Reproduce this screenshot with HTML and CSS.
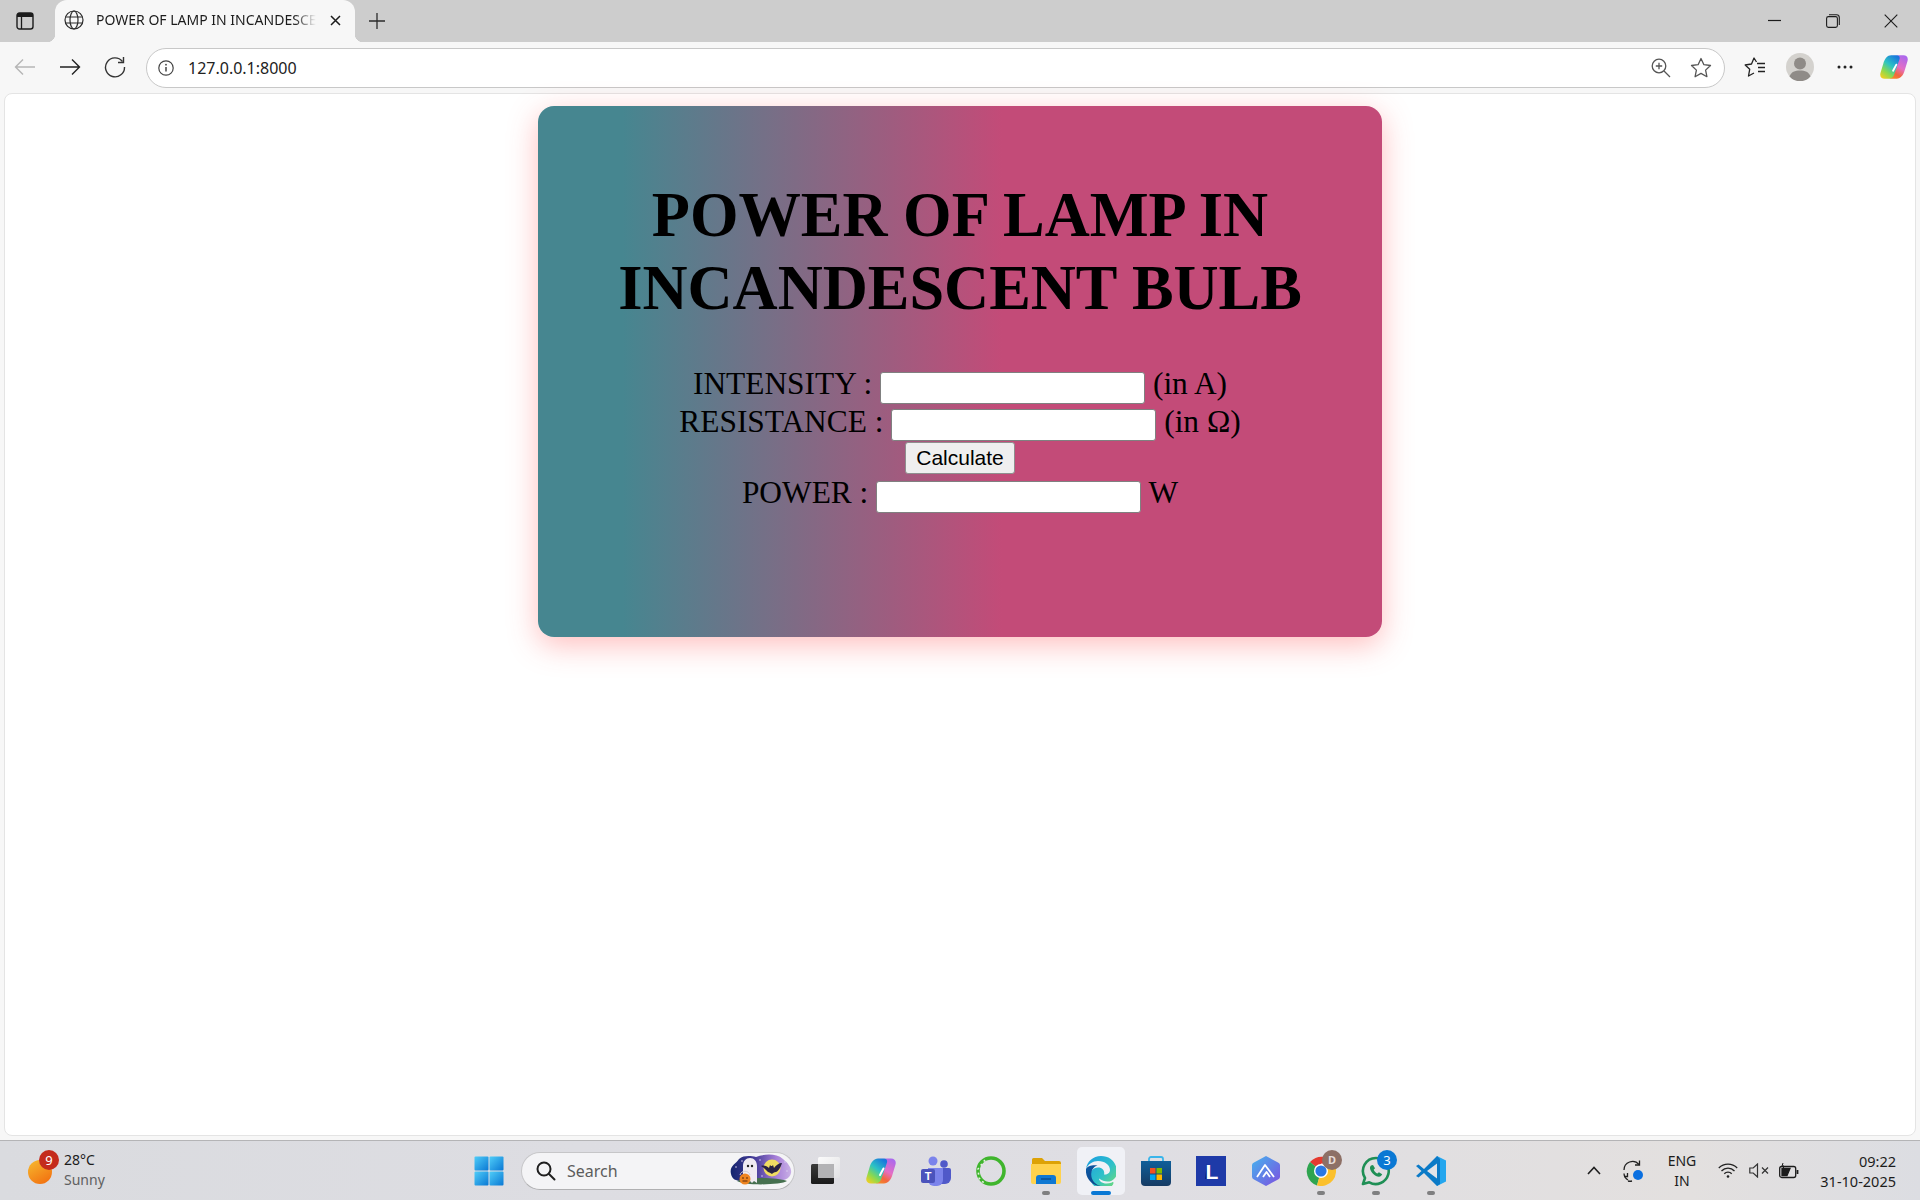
FILE: index.html
```html
<!DOCTYPE html>
<html lang="en">
<head>
<meta charset="utf-8">
<title>POWER OF LAMP IN INCANDESCENT BULB</title>
<link rel="stylesheet" href="styles.css">
</head>
<body>
<svg class="defs" width="0" height="0" aria-hidden="true">
  <defs>
    <linearGradient id="cpA" x1="0.75" y1="0" x2="0.1" y2="1"><stop offset="0" stop-color="#1a78dc"/><stop offset=".4" stop-color="#2cc3c4"/><stop offset=".7" stop-color="#8ad94f"/><stop offset="1" stop-color="#f7cf1d"/></linearGradient>
    <linearGradient id="cpB" x1="0.8" y1="0" x2="0.3" y2="1"><stop offset="0" stop-color="#a968ee"/><stop offset=".5" stop-color="#e56ec4"/><stop offset=".8" stop-color="#f2663f"/><stop offset="1" stop-color="#f4862a"/></linearGradient>
    <linearGradient id="winG" x1="0" y1="0" x2="1" y2="1"><stop offset="0" stop-color="#4fcdf8"/><stop offset="1" stop-color="#0a78d4"/></linearGradient>
    <linearGradient id="sunG" x1="0.2" y1="0" x2="0.8" y2="1"><stop offset="0" stop-color="#f6b52c"/><stop offset="1" stop-color="#f26f10"/></linearGradient>
    <linearGradient id="edgeA" x1="0" y1="0" x2="1" y2="1"><stop offset="0" stop-color="#1b9de2"/><stop offset=".55" stop-color="#2fc1c9"/><stop offset="1" stop-color="#7be06a"/></linearGradient>
    <linearGradient id="edgeB" x1="0" y1="0" x2="1" y2="1"><stop offset="0" stop-color="#0c5aa6"/><stop offset="1" stop-color="#0f3f82"/></linearGradient>
    <linearGradient id="mtG" x1="0" y1="0" x2="1" y2="1"><stop offset="0" stop-color="#45b4ee"/><stop offset="1" stop-color="#7d4fe0"/></linearGradient>
    <linearGradient id="bagG" x1="0" y1="0" x2="0" y2="1"><stop offset="0" stop-color="#0f5f9a"/><stop offset="1" stop-color="#163a63"/></linearGradient>
    <linearGradient id="ghostG" x1="0" y1="0" x2="1" y2="0"><stop offset="0" stop-color="#14246e"/><stop offset=".42" stop-color="#4a3f9c"/><stop offset=".75" stop-color="#a77fd8"/><stop offset="1" stop-color="#c9b0e6"/></linearGradient>
    <linearGradient id="tvG" x1="0" y1="0" x2="1" y2="1"><stop offset="0" stop-color="#fbfbfb"/><stop offset="1" stop-color="#e2e2e4"/></linearGradient>
    <linearGradient id="tvD" x1="0" y1="0" x2="0" y2="1"><stop offset="0" stop-color="#3a3a3a"/><stop offset="1" stop-color="#1a1a1a"/></linearGradient>
    <symbol id="copilot" viewBox="0 0 30 30">
      <path fill="url(#cpB)" d="M18 27.500h-6c-2.500 0-3.500-1.500-3-4l1-3 5-14c1-2.500 3-4 5.500-4H25c3.500 0 5.500 2.500 4.500 6l-3 10C25 24 22 27.500 18 27.500z"/>
      <path fill="url(#cpA)" d="M12 2.500h6c2.500 0 3.500 1.500 3 4l-1 3-5 14c-1 2.500-3 4-5.500 4H5c-3.500 0-5.500-2.500-4.500-6l3-10C5 6 8 2.500 12 2.500z"/>
      <path stroke="#fff" stroke-width="2" stroke-linecap="round" d="M17.500 12.500l-3.500 6.500"/>
    </symbol>
  </defs>
</svg>

<header class="tabstrip">
  <div class="tabstrip-btn">
    <svg width="18" height="18" viewBox="0 0 18 18"><rect x="1" y="1" width="16" height="16" rx="2.500" fill="none" stroke="#1c1c1c" stroke-width="1.400"/><path d="M1 3.500A2.500 2.500 0 0 1 3.500 1h11A2.500 2.500 0 0 1 17 3.500V5H1z" fill="#1c1c1c"/><path d="M5.500 5v12" stroke="#1c1c1c" stroke-width="1.300"/></svg>
  </div>
  <div class="tab">
    <svg class="tab-globe" width="20" height="20" viewBox="0 0 20 20" fill="none" stroke="#2b2b2b" stroke-width="1.200"><circle cx="10" cy="10" r="9"/><ellipse cx="10" cy="10" rx="4" ry="9"/><path d="M1.500 7h17M1.500 13h17"/></svg>
    <span class="tab-title">POWER OF LAMP IN INCANDESCENT BULB</span>
    <svg class="tab-close" width="11" height="11" viewBox="0 0 11 11"><path d="M1 1l9 9M10 1l-9 9" stroke="#1c1c1c" stroke-width="1.500"/></svg>
  </div>
  <div class="newtab">
    <svg width="18" height="18" viewBox="0 0 18 18"><path d="M9 1v16M1 9h16" stroke="#2b2b2b" stroke-width="1.300"/></svg>
  </div>
  <div class="winctl">
    <div class="winctl-btn"><svg width="14" height="14" viewBox="0 0 14 14"><path d="M0 6.500h13" stroke="#1c1c1c" stroke-width="1.200"/></svg></div>
    <div class="winctl-btn"><svg width="14" height="14" viewBox="0 0 14 14" fill="none" stroke="#1c1c1c" stroke-width="1.100"><rect x=".6" y="2.600" width="10.800" height="10.800" rx="1.800"/><path d="M3 .7h7.500A2.800 2.800 0 0 1 13.300 3.500V11"/></svg></div>
    <div class="winctl-btn"><svg width="14" height="14" viewBox="0 0 14 14"><path d="M.7.7l12.600 12.600M13.300.7L.7 13.300" stroke="#1c1c1c" stroke-width="1.100"/></svg></div>
  </div>
</header>

<nav class="toolbar">
  <div class="tool"><svg width="22" height="18" viewBox="0 0 22 18" fill="none" stroke="#b6b6b6" stroke-width="1.400"><path d="M21 9H1.500M9 1.500L1.500 9 9 16.500"/></svg></div>
  <div class="tool"><svg width="22" height="18" viewBox="0 0 22 18" fill="none" stroke="#222" stroke-width="1.400"><path d="M1 9h19.500M13 1.500L20.500 9 13 16.500"/></svg></div>
  <div class="tool"><svg width="22" height="22" viewBox="0 0 22 22" fill="none" stroke="#333" stroke-width="1.400"><path d="M18.500 5.500A9.500 9.500 0 1 0 20.500 11"/><path d="M19.500 1v5.500H14"/></svg></div>
  <div class="address">
    <svg class="addr-info" width="16" height="16" viewBox="0 0 16 16" fill="none" stroke="#444" stroke-width="1.200"><circle cx="8" cy="8" r="7.200"/><path d="M8 7v4.500" stroke-width="1.500"/><circle cx="8" cy="4.700" r=".9" fill="#444" stroke="none"/></svg>
    <span class="url">127.0.0.1:8000</span>
    <div class="addr-end">
      <svg width="20" height="20" viewBox="0 0 20 20" fill="none" stroke="#555" stroke-width="1.300"><circle cx="8" cy="8" r="6.800"/><path d="M8 4.800v6.400M4.800 8h6.400M13 13l6 6"/></svg>
      <svg width="22" height="21" viewBox="0 0 22 21" fill="none" stroke="#555" stroke-width="1.300" stroke-linejoin="round"><path d="M11 1.500l2.900 6.200 6.600.8-4.900 4.600 1.300 6.600-5.900-3.300-5.900 3.300 1.300-6.600L1.500 8.500l6.600-.8z"/></svg>
    </div>
  </div>
  <div class="tool-group">
    <div class="tool"><svg width="22" height="20" viewBox="0 0 22 20" fill="none" stroke="#222" stroke-width="1.300" stroke-linejoin="round"><path d="M12.500 5L10 1 7.500 7 1.200 8l4.500 4.300L4.500 19l5.500-3"/><path d="M13 6.500h8M14 10.500h7M14 14.500h7"/></svg></div>
    <div class="tool"><svg width="28" height="28" viewBox="0 0 28 28"><circle cx="14" cy="14" r="14" fill="#d4d2ce"/><circle cx="14" cy="10.500" r="6" fill="#8f8b87"/><path d="M3.500 23.500C5 19 9 17.500 14 17.500s9 1.500 10.500 6A14 14 0 0 1 3.500 23.500z" fill="#8f8b87"/></svg></div>
    <div class="tool"><svg width="16" height="4" viewBox="0 0 16 4" fill="#222"><circle cx="2" cy="2" r="1.500"/><circle cx="8" cy="2" r="1.500"/><circle cx="14" cy="2" r="1.500"/></svg></div>
    <div class="tool tool-wide"><svg width="28" height="28"><use href="#copilot"/></svg></div>
  </div>
</nav>

<main class="viewport">
  <section class="card">
    <h1 class="card-title">POWER OF LAMP IN INCANDESCENT BULB</h1>
    <form class="calc">
      <label class="row">INTENSITY : <input class="field" type="text"> (in A)</label>
      <label class="row">RESISTANCE : <input class="field" type="text"> (in Ω)</label>
      <div class="btn-row"><button class="calc-btn" type="button">Calculate</button></div>
      <label class="row">POWER : <input class="field" type="text"> W</label>
    </form>
  </section>
</main>

<footer class="taskbar">
  <div class="weather">
    <div class="weather-icon">
      <svg width="24" height="24" viewBox="0 0 24 24"><circle cx="12" cy="12" r="12" fill="url(#sunG)"/></svg>
      <span class="weather-badge">9</span>
    </div>
    <div class="weather-text"><span class="temp">28°C</span><span class="cond">Sunny</span></div>
  </div>
  <div class="center">
    <div class="cell"><svg width="30" height="30" viewBox="0 0 30 30" fill="url(#winG)"><rect x="0.500" y="0.500" width="14" height="14" rx="1"/><rect x="15.500" y="0.500" width="14" height="14" rx="1"/><rect x="0.500" y="15.500" width="14" height="14" rx="1"/><rect x="15.500" y="15.500" width="14" height="14" rx="1"/></svg></div>
    <div class="search">
      <svg class="search-icon" width="20" height="20" viewBox="0 0 20 20" fill="none" stroke="#1f1f1f" stroke-width="2"><circle cx="8" cy="8" r="6.500"/><path d="M13 13l5.500 5.500" stroke-linecap="round"/></svg>
      <span class="search-text">Search</span>
      <svg class="search-art" width="64" height="34" viewBox="0 0 64 34">
        <path d="M2 20C0 12 7 10 10 5c5-4 12-3 17-2 8-3 20-4 27 2 5 4 9 9 8 14-1 6-8 8-14 8H12C7 27 3 25 2 20z" fill="url(#ghostG)"/>
        <path d="M8 27c10-4 40-4 50 0-6 4-42 5-50 0z" fill="#46704f"/>
        <circle cx="43" cy="14" r="8.500" fill="#f0dc62"/>
        <path d="M32 12c3-1 6 0 8 2l1-3 1 1h1l1-1 1 3c2-3 5-5 8-5-1 3-3 8-6 9-2 0-3 1-4 2-1-1-2-1-4-2-3-3-5-5-7-6z" fill="#2a2344"/>
        <g fill="#d9cdf0"><circle cx="7" cy="13" r=".8"/><circle cx="13" cy="7" r=".8"/><circle cx="31" cy="6" r=".8"/><circle cx="56" cy="8" r=".8"/><circle cx="58" cy="17" r=".8"/><circle cx="33" cy="22" r=".8"/></g>
        <path d="M14 29V12c0-5 3-8 7-8s7 3 7 8v17l-3-2-2 2-2-2-3 2z" fill="#efeaf2"/>
        <circle cx="19" cy="12" r="1.200" fill="#222"/><circle cx="23" cy="12" r="1.200" fill="#222"/>
        <path d="M11 21c1-5 9-5 10 0" fill="none" stroke="#cfcfd6" stroke-width="1"/>
        <circle cx="16" cy="25" r="5.500" fill="#ee8420"/>
        <path d="M13 24h2M17 24h2M13.500 27h5" stroke="#5a2a08" stroke-width="1"/>
      </svg>
    </div>
    <div class="apps">
      <div class="cell"><svg width="30" height="30" viewBox="0 0 30 30"><rect x="0" y="8" width="23" height="20" rx="1.500" fill="url(#tvD)"/><rect x="7" y="1" width="22" height="21" rx="1.500" fill="url(#tvG)"/><path d="M7 8h16v14H8.500A1.500 1.500 0 0 1 7 20.500z" fill="#b3b3b5"/></svg></div>
      <div class="cell"><svg width="30" height="30"><use href="#copilot"/></svg></div>
      <div class="cell"><svg width="30" height="30" viewBox="0 0 30 30"><circle cx="12" cy="5" r="4.500" fill="#7b83eb"/><circle cx="23" cy="8" r="3.800" fill="#5059c9"/><path d="M18 12h10a2 2 0 0 1 2 2v8a6 6 0 0 1-6 6h-6z" fill="#5059c9"/><path d="M7 12h15v12a6 6 0 0 1-6 6h-3a6 6 0 0 1-6-6z" fill="#7b83eb"/><rect x="0" y="13" width="14" height="14" rx="2" fill="#4b53bc"/><text class="svg-t" x="7" y="24" text-anchor="middle" font-size="11" fill="#fff">T</text></svg></div>
      <div class="cell"><svg width="30" height="30" viewBox="0 0 30 30" fill="none"><circle cx="15" cy="15" r="13" stroke="#3fb52d" stroke-width="3.600"/><path d="M9 4L2 13l1 9 5 5" stroke="#e6f0e0" stroke-width="1.600" stroke-dasharray="2 3"/></svg></div>
      <div class="cell running"><svg width="30" height="30" viewBox="0 0 30 30"><path d="M1 3.500A1.500 1.500 0 0 1 2.500 2H11l3 3h14a2 2 0 0 1 2 2v3H1z" fill="#dda206"/><path d="M0 8h30v18a2 2 0 0 1-2 2H2a2 2 0 0 1-2-2z" fill="#ffd24d"/><path d="M5 22a3 3 0 0 1 3-3h14a3 3 0 0 1 3 3v6H5z" fill="#0f78d2"/><path d="M10 23h10" stroke="#0a4d8e" stroke-width="1.400"/></svg></div>
      <div class="cell active"><svg width="30" height="30" viewBox="0 0 30 30"><path d="M15 0C7 0 1 5.500 0 13c2-5 7-8 12-8 7 0 12 4 12 9 0 3-3 5-6 4.500 1-3-1-7-6-7-5 0-8 4-8 9 0 8 7 13 13 13 5 0 8-2 10-5 1-2 .5-3-1-2-8 3-13-1-13-4 5 4 12 4 15 .5 2.500-2 3-5 3-8.500C30 6 24 0 15 0z" fill="url(#edgeA)"/><path d="M0 13c-1 9 6 17 15 17 1 0 1 0 0 0-6-1-11-7-9.500-14 1-4 4-6.500 6.500-6.500-5-1-11 .500-12 3.500z" fill="url(#edgeB)"/></svg></div>
      <div class="cell"><svg width="30" height="30" viewBox="0 0 30 30"><path d="M8 5V3a2 2 0 0 1 2-2h10a2 2 0 0 1 2 2v2" fill="none" stroke="#3ab5ea" stroke-width="1.800"/><path d="M0 5h30v21a4 4 0 0 1-4 4H4a4 4 0 0 1-4-4z" fill="url(#bagG)"/><rect x="9" y="12" width="5.500" height="5.500" fill="#f25022"/><rect x="15.500" y="12" width="5.500" height="5.500" fill="#7fba00"/><rect x="9" y="18.500" width="5.500" height="5.500" fill="#00a4ef"/><rect x="15.500" y="18.500" width="5.500" height="5.500" fill="#ffb900"/></svg></div>
      <div class="cell"><svg width="30" height="30" viewBox="0 0 30 30"><rect width="30" height="30" fill="#1e3aa8"/><path d="M9 23l2-16v16z" fill="#0c2270"/><text class="svg-t" x="16" y="23" text-anchor="middle" font-size="21" fill="#fff">L</text></svg></div>
      <div class="cell"><svg width="28" height="30" viewBox="0 0 28 30"><path d="M14 0l12 6.500a3 3 0 0 1 2 3V21a3 3 0 0 1-2 2.500L14 30 2 23.500A3 3 0 0 1 0 21V9.500a3 3 0 0 1 2-3z" fill="url(#mtG)"/><path d="M5 21L13 9l9 12M11 21l3.500-5 3.500 5" fill="none" stroke="#fff" stroke-width="1.800" stroke-linejoin="round"/></svg></div>
      <div class="cell running">
        <svg width="30" height="30" viewBox="0 0 30 30"><path d="M15 15L4 6A15 15 0 0 1 28 7.500H15z" fill="#e53a2f"/><path d="M15 15L4 6A15 15 0 0 0 11 29.500z" fill="#2ea44f"/><path d="M15 15L11 29.500A15 15 0 0 0 28 7.500z" fill="#fbc02d"/><circle cx="15" cy="15" r="7" fill="#fff"/><circle cx="15" cy="15" r="5.600" fill="#2a78e4"/></svg>
        <span class="badge badge-d">D</span>
      </div>
      <div class="cell running">
        <svg width="30" height="30" viewBox="0 0 30 30" fill="none"><path d="M15 2a13 13 0 0 0-11 20L2 28l6.300-1.700A13 13 0 1 0 15 2z" stroke="#1f8f55" stroke-width="2.600" stroke-linejoin="round"/><path d="M10 9.500c-1.800 1.500-1.200 5 2 8.200 3 3 6.500 3.800 8.200 2l1-1.500-3.300-2-1.500 1.300c-1.500-.5-3-2-3.700-3.700l1.300-1.500-2-3.300z" fill="#1f8f55"/></svg>
        <span class="badge badge-n">3</span>
      </div>
      <div class="cell running"><svg width="30" height="30" viewBox="0 0 30 30"><path d="M21 0l9 4.500v21L21 30z" fill="#24a6ee"/><path d="M21 0L8 13 2.500 8.500 0 10l5.500 5L0 20l2.500 1.500L8 17l13 13 3-2V3z" fill="#0b7ac7"/><path d="M21 7.500L11 15l10 7.500z" fill="#e2e3e8"/></svg></div>
    </div>
  </div>
  <div class="tray">
    <div class="tray-item tray-chev"><svg width="14" height="9" viewBox="0 0 14 9" fill="none" stroke="#1f1f1f" stroke-width="1.600"><path d="M1 8l6-6.500L13 8"/></svg></div>
    <div class="tray-item tray-sync"><svg width="22" height="22" viewBox="0 0 22 22" fill="none" stroke="#222" stroke-width="1.300"><path d="M1 10A8.500 8.500 0 0 1 16 4.500"/><path d="M16.500.5V5h-4.500"/><path d="M5 21a8 8 0 0 0 4 0"/><path d="M4.500 13v3.500H1"/><path d="M1 13.500a8 8 0 0 0 4 6.500"/><circle cx="15" cy="15" r="5" fill="#0a6fe0" stroke="none"/></svg></div>
    <div class="tray-lang"><span>ENG</span><span>IN</span></div>
    <div class="tray-item tray-wifi"><svg width="20" height="15" viewBox="0 0 20 15" fill="none" stroke="#222" stroke-width="1.300"><path d="M.8 5a13 13 0 0 1 18.400 0M3.500 8a9 9 0 0 1 13 0M6.300 10.800a5 5 0 0 1 7.400 0"/><circle cx="10" cy="13.500" r="1.300" fill="#222" stroke="none"/></svg></div>
    <div class="tray-item"><svg width="20" height="15" viewBox="0 0 20 15" fill="none" stroke="#333" stroke-width="1.200"><path d="M.8 5h3.400L8.500 1v13L4.200 10H.8z"/><path d="M13 4.500l6 6M19 4.500l-6 6"/></svg></div>
    <div class="tray-item"><svg width="20" height="16" viewBox="0 0 20 16" fill="none" stroke="#1c1c1c" stroke-width="1.300"><rect x=".7" y="3.500" width="16" height="11" rx="2"/><path d="M18.500 7v4" stroke-width="1.800"/><path d="M3 5.500h8l-3 7H3z" fill="#1c1c1c"/><path d="M4 0l-1 3 2 0-1 3" stroke-width="1"/></svg></div>
    <div class="clock"><span>09:22</span><span>31-10-2025</span></div>
  </div>
</footer>
</body>
</html>
```
FILE: styles.css
```css
* { box-sizing: border-box; }
html, body { height: 100%; }
body {
  margin: 0;
  height: 100vh;
  display: flex;
  flex-direction: column;
  background: #f7f7f7;
  overflow: hidden;
  font-family: "Noto Sans", "Open Sans", sans-serif;
  color: #1c1c1c;
}
.defs { position: absolute; }

/* tab strip */
.tabstrip { height: 42px; flex: none; display: flex; background: #cdcdcd; }
.tabstrip-btn { width: 55px; padding-left: 16px; display: flex; align-items: center; }
.tab {
  position: relative;
  width: 300px;
  background: #f7f7f7;
  border-radius: 12px 12px 0 0;
  display: flex;
  align-items: center;
  padding: 0 14px 2px 9px;
}
.tab::before, .tab::after { content: ""; position: absolute; bottom: 0; width: 8px; height: 8px; }
.tab::before { left: -8px; background: radial-gradient(circle at 0 0, transparent 8px, #f7f7f7 8.500px); }
.tab::after { right: -8px; background: radial-gradient(circle at 100% 0, transparent 8px, #f7f7f7 8.500px); }
.tab-globe { flex: none; }
.tab-title {
  flex: 1;
  margin-left: 12px;
  margin-bottom: 2px;
  font-size: 14px;
  white-space: nowrap;
  overflow: hidden;
  -webkit-mask-image: linear-gradient(90deg, #000 90%, transparent 100%);
  mask-image: linear-gradient(90deg, #000 90%, transparent 100%);
}
.tab-close { flex: none; margin-left: 14px; }
.newtab { width: 44px; display: flex; align-items: center; justify-content: center; }
.winctl { margin-left: auto; display: flex; }
.winctl-btn { width: 58px; display: flex; align-items: center; justify-content: center; }

/* toolbar */
.toolbar { height: 51px; flex: none; display: flex; align-items: center; padding: 0 2px 0 2px; }
.tool { width: 45px; height: 40px; flex: none; display: flex; align-items: center; justify-content: center; padding-bottom: 2px; }
.tool-wide { width: 48px; margin-left: 3px; }
.tool-group { display: flex; margin-left: 7px; flex: none; }
.address {
  flex: 1;
  height: 40px;
  margin-left: 9px;
  display: flex;
  align-items: center;
  background: #fff;
  border: 1px solid #c8c8c8;
  border-radius: 20px;
  padding: 0 12px 0 11px;
}
.addr-info { flex: none; }
.url { margin-left: 14px; font-size: 16px; color: #222; }
.addr-end { margin-left: auto; display: flex; align-items: center; gap: 19px; }

/* page */
.viewport {
  flex: 1;
  min-height: 0;
  margin: 0 4px 4px;
  background: #fff;
  border: 1px solid #e4e4e4;
  border-radius: 8px;
  padding-top: 12px;
}
.card {
  width: 844px;
  height: 531px;
  margin: 0 auto;
  padding: 29px 40px 0;
  border-radius: 16px;
  text-align: center;
  background: linear-gradient(90deg, #468690 10%, #c34b78 55%);
  box-shadow: 0 8px 30px rgba(255, 70, 70, .35);
  font-family: "Liberation Serif", "Times New Roman", serif;
  color: #000;
}
.card-title { margin: 43px 0 42px; font-size: 62.4px; line-height: 73px; font-weight: 700; }
.calc { font-size: 31.4px; }
.row { display: block; }
.btn-row { font-size: 16px; line-height: 0; padding-top: 1px; padding-bottom: 1px; }
.field {
  font-family: "Liberation Sans", Arial, sans-serif;
  font-size: 20px;
  height: 32px;
  width: 265px;
  background: #fff;
  border: 1px solid #808080;
  border-radius: 3px;
  padding: 1px 2px;
}
.calc-btn {
  font-family: "Liberation Sans", Arial, sans-serif;
  font-size: 21px;
  padding: 0 10.500px;
  height: 32px;
  background: #efefef;
  border: 1px solid #8f8f8f;
  border-radius: 3px;
  color: #000;
}

/* taskbar */
.taskbar {
  height: 60px;
  flex: none;
  display: flex;
  align-items: center;
  background: linear-gradient(90deg, #dadbdf 0%, #dddde2 30%, #dfdee3 60%, #e3e0df 88%, #dcdde2 100%);
  border-top: 1px solid #b4b4b6;
}
.weather { width: 465px; flex: none; display: flex; align-items: center; padding-left: 28px; }
.weather-icon { position: relative; width: 24px; height: 24px; margin-top: 2px; }
.weather-icon svg { display: block; }
.weather-badge {
  position: absolute;
  top: -10px;
  left: 11px;
  width: 20px;
  height: 20px;
  border-radius: 50%;
  background: #c42b1c;
  color: #fff;
  font-size: 13px;
  line-height: 20px;
  text-align: center;
}
.weather-text { display: flex; flex-direction: column; margin: -1px 0 0 12px; font-size: 14px; line-height: 20px; }
.temp { color: #1c1c1c; }
.cond { color: #606060; }
.center { display: flex; align-items: center; }
.cell {
  position: relative;
  width: 48px;
  height: 48px;
  flex: none;
  display: flex;
  align-items: center;
  justify-content: center;
}
.cell > svg { display: block; }
.cell.active { background: #f0f1f6; border-radius: 5px; }
.cell.running::after, .cell.active::after {
  content: "";
  position: absolute;
  bottom: 0;
  left: 50%;
  height: 4px;
  border-radius: 2px;
}
.cell.running::after { width: 8px; margin-left: -4px; background: #7f7f80; }
.cell.active::after { width: 20px; margin-left: -10px; background: #0a78d4; }
.search {
  width: 274px;
  height: 38px;
  margin-left: 8px;
  flex: none;
  display: flex;
  align-items: center;
  background: #f4f4f6;
  border: 1px solid #c6c6c8;
  border-bottom-color: #b0b0b2;
  border-radius: 19px;
  padding-left: 14px;
}
.search-text { margin-left: 11px; font-size: 16px; color: #5c5c5c; }
.search-art { margin-left: auto; margin-right: 1px; }
.apps { display: flex; gap: 7px; margin-left: 7px; }
.svg-t { font-family: "Liberation Sans", Arial, sans-serif; font-weight: 700; }
.badge {
  position: absolute;
  top: 3px;
  left: 25px;
  width: 20px;
  height: 20px;
  border-radius: 50%;
  text-align: center;
  line-height: 20px;
  font-size: 12px;
  color: #fff;
}
.badge-d { background: #8d7066; font-size: 11px; color: #e6dcd8; font-weight: 700; }
.badge-n { background: #0a78d4; font-size: 13px; }
.tray { flex: 1; display: flex; align-items: center; padding-right: 24px; }
.tray-item { width: 30px; display: flex; justify-content: center; align-items: center; }
.tray-chev { width: 40px; margin-left: auto; }
.tray-sync { width: 39px; }
.tray-wifi { width: 33px; }
.tray-lang { width: 58px; display: flex; flex-direction: column; align-items: center; font-size: 14px; line-height: 20px; color: #1c1c1c; }
.clock { width: 92px; display: flex; flex-direction: column; align-items: flex-end; font-size: 14.500px; line-height: 20px; color: #1c1c1c; }
```
